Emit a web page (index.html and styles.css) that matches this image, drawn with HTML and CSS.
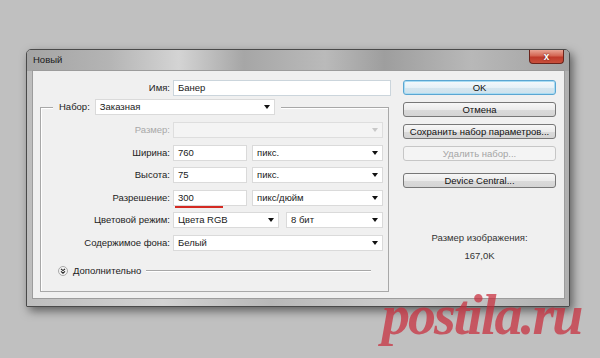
FILE: index.html
```html
<!DOCTYPE html>
<html lang="ru">
<head>
  <meta charset="UTF-8">
  <title>Новый</title>
  <link rel="stylesheet" href="styles.css">
</head>
<body>

  <div class="dialog">
    <div class="titlebar">
      <span class="title">Новый</span>
      <button class="close-btn">x</button>
    </div>

    <div class="client">
      <!-- Left side: name + preset group -->
      <div class="main-col">
        <div class="name-row">
          <label class="lbl">Имя:</label>
          <div class="field name-field">Банер</div>
        </div>

        <fieldset class="preset">
          <legend>
            <span class="lbl">Набор:</span>
            <span class="field select preset-select">Заказная</span>
          </legend>

          <div class="rows">
            <label class="lbl off">Размер:</label>
            <span class="field select off"></span>

            <label class="lbl">Ширина:</label>
            <div class="pair">
              <span class="field num">760</span>
              <span class="field select">пикс.</span>
            </div>

            <label class="lbl">Высота:</label>
            <div class="pair">
              <span class="field num">75</span>
              <span class="field select">пикс.</span>
            </div>

            <label class="lbl">Разрешение:</label>
            <div class="pair">
              <span class="field num marked">300</span>
              <span class="field select">пикс/дюйм</span>
            </div>

            <label class="lbl">Цветовой режим:</label>
            <div class="pair mode">
              <span class="field select">Цвета RGB</span>
              <span class="field select">8 бит</span>
            </div>

            <label class="lbl">Содержимое фона:</label>
            <span class="field select">Белый</span>
          </div>

          <div class="advanced">
            <svg class="toggle" width="10" height="10" viewBox="0 0 10 10">
              <circle cx="5" cy="5" r="4.5" fill="#f4f4f4" stroke="#a8a8a8"/>
              <polyline points="3,2.8 5,4.6 7,2.8" fill="none" stroke="#222" stroke-width="1.1"/>
              <polyline points="3,5.4 5,7.2 7,5.4" fill="none" stroke="#222" stroke-width="1.1"/>
            </svg>
            <span>Дополнительно</span>
            <span class="rule"></span>
          </div>
        </fieldset>
      </div>

      <!-- Right side: buttons + info -->
      <div class="side-col">
        <button class="btn default">OK</button>
        <button class="btn">Отмена</button>
        <button class="btn">Сохранить набор параметров...</button>
        <button class="btn off">Удалить набор...</button>
        <button class="btn device">Device Central...</button>
        <div class="info">
          Размер изображения:<br>
          167,0K
        </div>
      </div>
    </div>
  </div>

  <div class="watermark">postila.ru</div>

</body>
</html>
```

FILE: styles.css
```css
body {
  margin: 0;
  padding: 49px 0 0 26px;
  height: 358px;
  box-sizing: border-box;
  overflow: hidden;
  background: #c0c0c0;
  font-family: 'Liberation Sans', Arial, sans-serif;
  font-size: 9.5px;
  color: #222;
}

.dialog {
  width: 544px;
  height: 258px;
  box-sizing: border-box;
  border: 1px solid #4a4a4a;
  border-radius: 5px 5px 1px 1px;
  background: linear-gradient(90deg, #bdbdbd, #d2d2d2 25%, #b8b8b8 45%, #cdcdcd 70%, #b0b0b0);
  box-shadow: 3px 4px 10px rgba(0, 0, 0, 0.5);
  display: flex;
  flex-direction: column;
}

.titlebar {
  height: 21px;
  display: flex;
  justify-content: space-between;
  align-items: flex-start;
  padding: 0 5px 0 6px;
  border-radius: 4px 4px 0 0;
  background: linear-gradient(90deg, #a4a4a4 0%, #b4b4b4 15%, #d4d4d4 28%, #a6a6a6 40%, #bababa 55%, #9e9e9e 66%, #b8b8b8 82%, #a2a2a2 100%);
}

.title {
  line-height: 20px;
  color: #1a1a1a;
}

.close-btn {
  width: 35px;
  height: 14px;
  padding: 0;
  border: 1px solid #6a241c;
  border-top: none;
  border-radius: 0 0 4px 4px;
  background: linear-gradient(#e9a494, #d46552 45%, #bf3a2a 55%, #c9503c);
  color: #fff;
  font: bold 10px 'Liberation Sans', Arial, sans-serif;
  line-height: 12px;
  text-shadow: 0 0 2px #5a1a12;
}

.client {
  height: 227px;
  margin: 0 5px 0 6px;
  display: flex;
  background: #f0f0f0;
  box-shadow: 0 0 0 1px #9c9c9c;
}

.main-col {
  width: 358px;
  padding-top: 9px;
}

.lbl {
  text-align: right;
  line-height: 16px;
  white-space: nowrap;
}

.lbl.off {
  color: #a8a8a8;
}

.field {
  display: block;
  height: 16px;
  box-sizing: border-box;
  padding: 0 4px;
  background: #fff;
  border: 1px solid #dadada;
  line-height: 14px;
  color: #1a1a1a;
  white-space: nowrap;
}

.name-row {
  display: grid;
  grid-template-columns: 137px 218px;
  column-gap: 3px;
  height: 16px;
}

.name-field {
  border-color: #cbd5dc;
}

.select {
  position: relative;
}

.select::after {
  content: '';
  position: absolute;
  right: 4px;
  top: 5px;
  border-left: 3px solid transparent;
  border-right: 3px solid transparent;
  border-top: 4px solid #111;
}

.select.off {
  background: #f4f4f4;
  border-color: #dedede;
}

.select.off::after {
  border-top-color: #c8c8c8;
}

/* Preset group box */
.preset {
  margin: 3px 2px 0 7px;
  padding: 0 5px 14px 0;
  border: 1px solid #a8a8a8;
  box-shadow: inset 1px 1px 0 #fff;
  min-width: 0;
}

.preset legend {
  margin-left: 12px;
  padding: 0 6px;
  display: flex;
  align-items: center;
  gap: 5px;
  height: 16px;
  background: #f0f0f0;
}

.preset-select {
  width: 180px;
}

.rows {
  display: grid;
  grid-template-columns: 129px 210px;
  grid-auto-rows: 16px;
  column-gap: 3px;
  row-gap: 6.6px;
  padding-top: 7px;
}

.pair {
  display: flex;
  gap: 5px;
}

.pair .field:last-child {
  flex: 1;
}

.pair .num {
  width: 74px;
}

.pair.mode {
  gap: 7px;
}

.pair.mode .field:first-child {
  width: 106px;
}

.marked {
  position: relative;
}

.marked::after {
  content: '';
  position: absolute;
  left: 1px;
  bottom: -3px;
  width: 48px;
  height: 2px;
  background: #d42a22;
}

.advanced {
  display: flex;
  align-items: center;
  height: 12px;
  margin: 14px 12px 0 17px;
}

.toggle {
  margin-right: 5px;
}

.rule {
  flex: 1;
  height: 1px;
  margin-left: 5px;
  background: #a8a8a8;
  box-shadow: 0 1px 0 #fff;
}

/* Buttons column */
.side-col {
  width: 153px;
  margin-left: 12px;
  padding-top: 9px;
}

.btn {
  display: block;
  width: 100%;
  height: 15px;
  margin-bottom: 7px;
  padding: 0;
  border: 1px solid #777;
  border-radius: 3px;
  background: linear-gradient(#f7f7f7, #ebebeb 50%, #dadada 52%, #d4d4d4);
  font: 9.5px 'Liberation Sans', Arial, sans-serif;
  line-height: 13px;
  color: #111;
}

.btn.default {
  border-color: #5aa6d2;
  box-shadow: inset 0 0 0 1px #a9dcf3;
  background: linear-gradient(#f4f9fc, #e6f1f7 50%, #d4e6f0 52%, #cfe2ec);
}

.btn.off {
  border-color: #c6c6c6;
  background: #f4f4f4;
  color: #a4a4a4;
}

.btn.device {
  margin-top: 12px;
}

.info {
  margin-top: 41px;
  text-align: center;
  line-height: 18px;
  color: #333;
}

.watermark {
  position: absolute;
  left: 382px;
  top: 287px;
  font: italic bold 56px 'Liberation Serif', serif;
  line-height: 56px;
  letter-spacing: -2px;
  color: rgba(200, 45, 60, 0.72);
}
```
